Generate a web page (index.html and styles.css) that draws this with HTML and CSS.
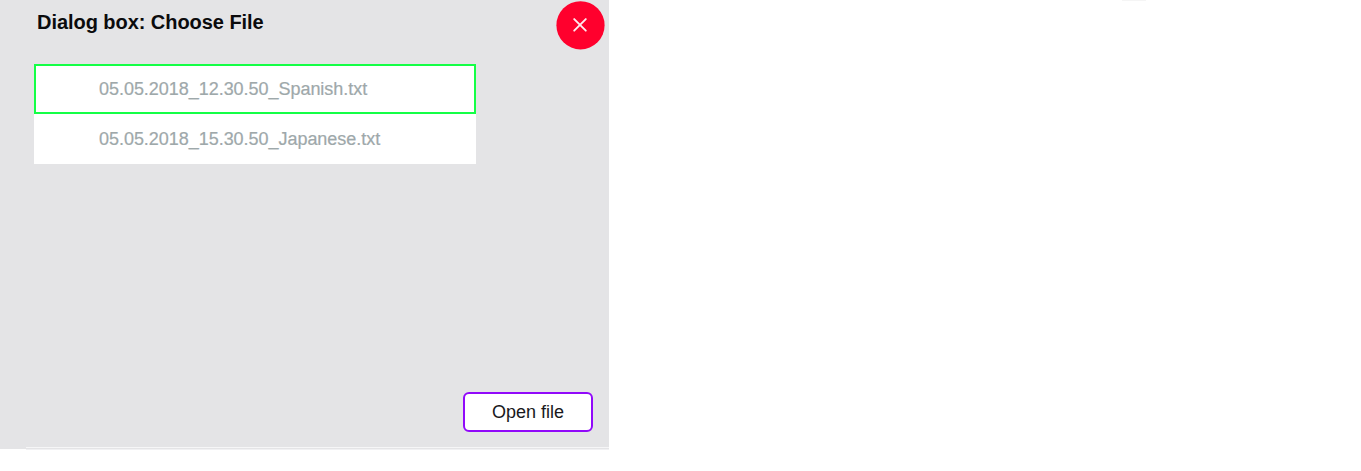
FILE: index.html
```
<!DOCTYPE html>
<html lang="en">
<head>
<meta charset="utf-8">
<title>Choose File</title>
<link rel="stylesheet" href="styles.css">
</head>
<body>
<main class="page">
  <section class="dialog">
    <header class="dialog-header">
      <h1 class="title">Dialog box: Choose File</h1>
      <button class="close" aria-label="Close">
        <svg class="close-icon" viewBox="0 0 49 49"><circle cx="24.5" cy="24.3" r="24.1" fill="#ff002d"/><path d="M18.2 18.1 29.8 29.7M29.8 18.1 18.2 29.7" stroke="#ffe9ee" stroke-width="1.9" stroke-linecap="round"/></svg>
      </button>
    </header>
    <ul class="files">
      <li class="file selected">05.05.2018_12.30.50_Spanish.txt</li>
      <li class="file">05.05.2018_15.30.50_Japanese.txt</li>
    </ul>
    <footer class="dialog-footer"><button class="open">Open file</button></footer>
    <div class="edge"></div>
  </section>
  <div class="tab-mark"></div>
</main>
</body>
</html>
```
FILE: styles.css
```
* { box-sizing: border-box; }
body { margin: 0; background: #fff; font-family: "Liberation Sans", Arial, sans-serif; }
.page { display: flex; align-items: flex-start; height: 471px; }
.dialog { display: flex; flex-direction: column; width: 609px; height: 449px; background: #e4e4e6; }
.dialog-header { display: flex; justify-content: space-between; height: 64px; padding: 0 4px 0 37px; }
.title { margin: 10px 0 0; font-size: 20px; line-height: 24px; font-weight: 700; letter-spacing: -0.05px; color: #0b0b0d; white-space: nowrap; }
.close { width: 49px; height: 49px; margin-top: 1px; padding: 0; border: 0; background: none; }
.close-icon { display: block; width: 49px; height: 49px; }
.files { width: 442px; margin: 0 0 0 34px; padding: 0; list-style: none; }
.file { display: flex; align-items: center; height: 50px; padding-left: 65px; background: #fff; font-size: 18px; letter-spacing: -0.035px; color: #9ea8aa; -webkit-text-stroke: 0.2px #9ea8aa; white-space: nowrap; }
.selected { padding-left: 63px; border: 2px solid #14ff46; }
.dialog-footer { display: flex; justify-content: flex-end; align-items: flex-end; flex: 1; padding: 0 16px 15px 0; }
.open { width: 130px; height: 40px; padding: 0; border: 2px solid #9109fa; border-radius: 6px; background: #fff; font-family: inherit; font-size: 18px; color: #18181b; }
.edge { height: 3px; margin: 0 0 -1px 26px; border-top: 1px solid #f6f6f7; border-bottom: 1px solid #f1f1f3; background: #e4e4e6; }
.tab-mark { width: 24px; height: 1px; margin-left: 513px; background: #f5f5f5; }
```
